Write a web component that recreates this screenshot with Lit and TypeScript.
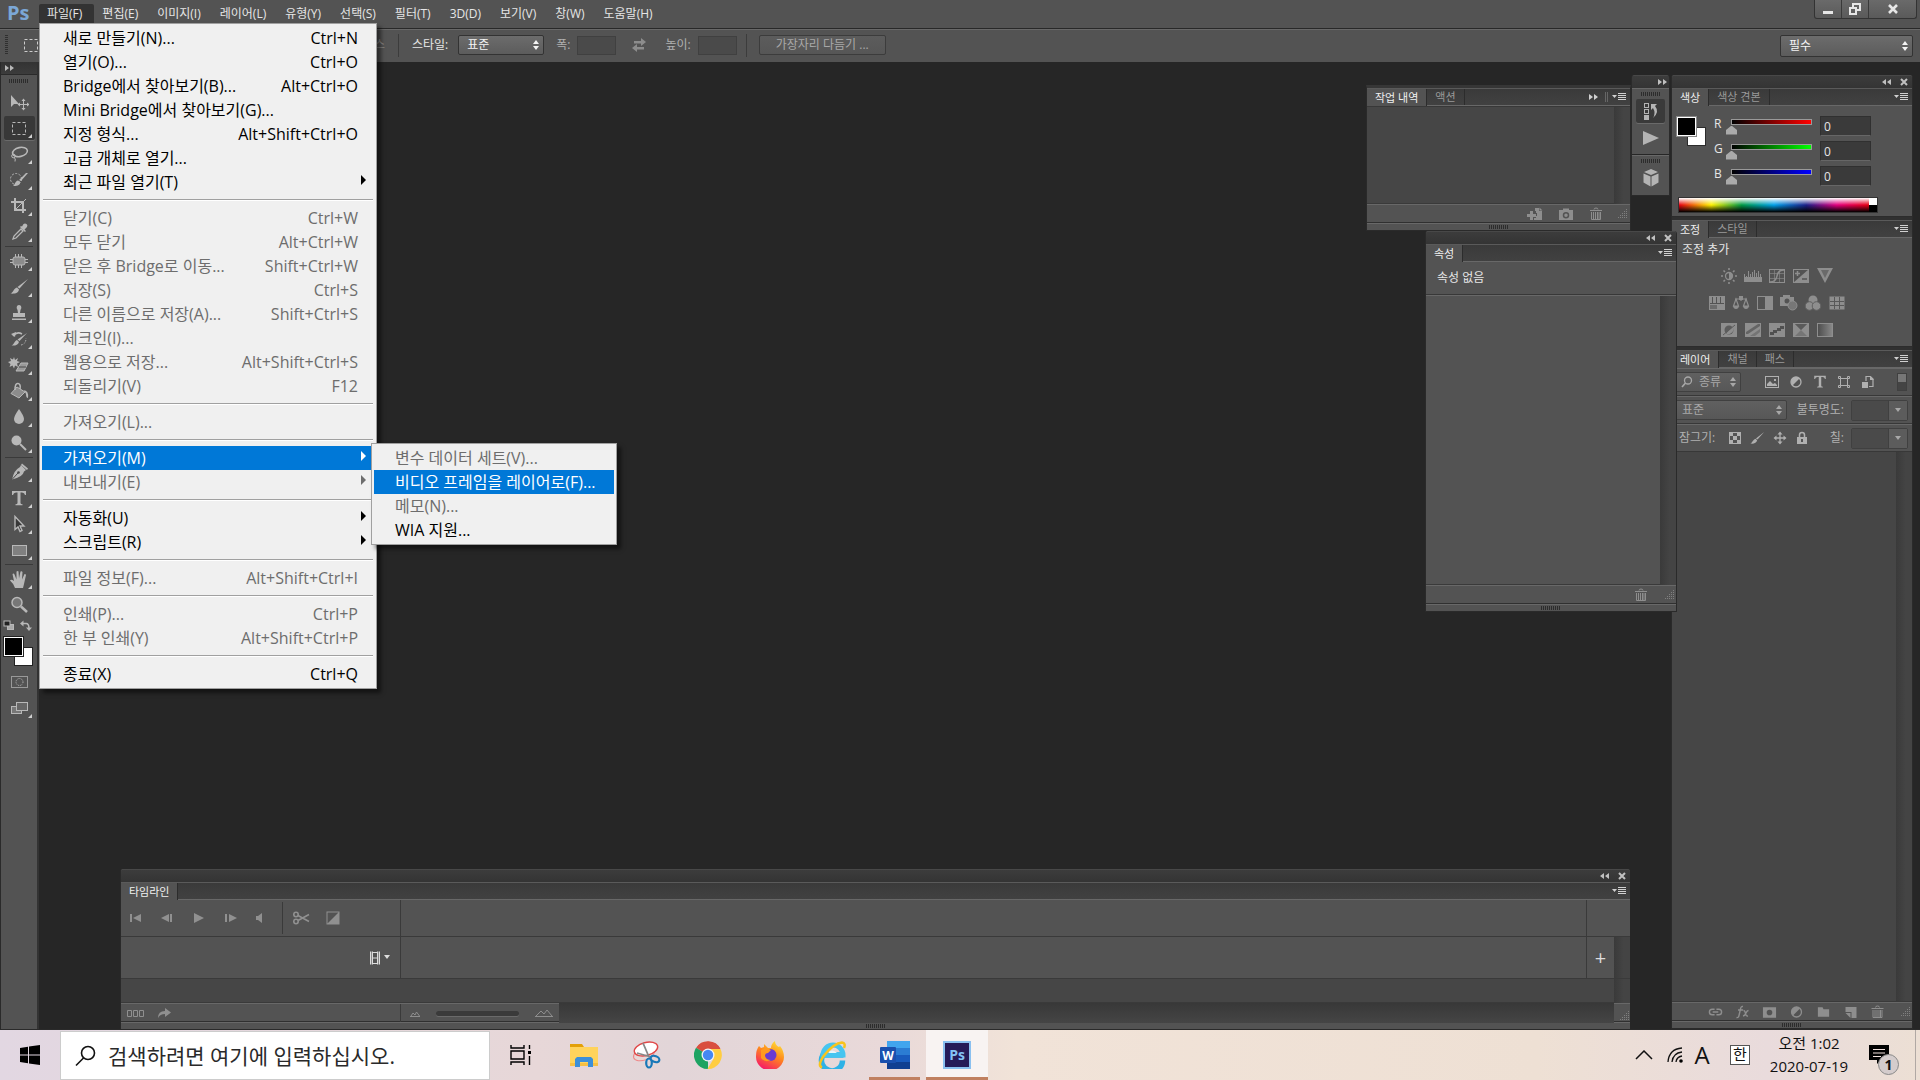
import { LitElement, html, css, svg, nothing, TemplateResult, SVGTemplateResult } from "lit";
import { customElement, property } from "lit/decorators.js";
import { classMap } from "lit/directives/class-map.js";

/* ---------- icons ---------- */

interface Glyph {
  w: number;
  h: number;
  body: SVGTemplateResult;
}

const g = (w: number, h: number, body: SVGTemplateResult): Glyph => ({ w, h, body });

const icons: Record<string, Glyph> = {
  // tools
  move: g(20, 20, svg`<path fill="currentColor" d="M2 3v12l3-3 5 0z"/><path stroke="currentColor" stroke-width="1" fill="none" d="M14.500 8v9M10 12.500h9"/><path fill="currentColor" d="M12.500 9l2-2.500 2 2.500zM12.500 16l2 2.500 2-2.500zM11 10.500l-2.500 2 2.500 2zM18 10.500l2.500 2-2.500 2z"/>`),
  marquee: g(20, 20, svg`<rect x="3.500" y="4.500" width="13" height="12" fill="none" stroke="currentColor" stroke-dasharray="3 2"/>`),
  lasso: g(20, 20, svg`<ellipse cx="11" cy="8" rx="7.500" ry="4.500" fill="none" stroke="currentColor" stroke-width="1.600" transform="rotate(-12 11 8)"/><circle cx="4.500" cy="12" r="1.800" fill="none" stroke="currentColor"/><path d="M5 13.500q2 1 1 4" fill="none" stroke="currentColor"/>`),
  quick: g(20, 20, svg`<circle cx="7" cy="9" r="5.500" fill="none" stroke="currentColor" stroke-dasharray="2 1.500"/><path fill="currentColor" d="M19 3l-7 8-2-1 7-7zM11 11.500c1 4-4 5-7 4.500 2-1 2-5 5-5.500z"/>`),
  crop: g(20, 20, svg`<path fill="none" stroke="currentColor" stroke-width="2" d="M6 2v12h11M2 6h12v11"/><path stroke="currentColor" d="M6 14L17 3"/>`),
  dropper: g(20, 20, svg`<path fill="none" stroke="currentColor" stroke-width="1.300" d="M4 17l1-3 7-7 2 2-7 7z"/><path fill="currentColor" d="M11 5l5 5 1-1-1.500-1.500 2.500-2.500q1-2-.5-3t-3 0L13 4.500 12 4z"/>`),
  heal: g(20, 20, svg`<rect x="4" y="6" width="12" height="8" rx="2" fill="#8c8c8c" stroke="currentColor"/><path stroke="currentColor" d="M6.500 3v3M9.500 3v3M12.500 3v3M6.500 14v3M9.500 14v3M12.500 14v3M1 8.500h3M1 11.500h3M16 8.500h3M16 11.500h3"/>`),
  brush: g(20, 20, svg`<path fill="currentColor" d="M19 2L10.500 11.500 8.500 10zM8 10.500l2 2c-.5 4-5 4.500-8.500 4 3-1 3-5 6.500-6z"/>`),
  stamp: g(20, 20, svg`<path fill="currentColor" d="M8 3a3 3 0 014 0q1 2-.500 4l-.5 3H16v4H4v-4h5l-.500-3q-1.500-2-.5-4zM3 15.500h14V17H3z"/>`),
  history: g(20, 20, svg`<path fill="currentColor" d="M18 4l-7.500 8-2-1.500zM8 11l2 2c-1 3-4 4-7.500 3.500 3-1 2.500-4.500 5.500-5.500z"/><path d="M4 7q4-5 9-2" fill="none" stroke="currentColor" stroke-width="1.500"/><path fill="currentColor" d="M2 5l5-2-1 5z"/><path d="M12 16q5-1 5-7" fill="none" stroke="currentColor" stroke-dasharray="1.500 1.500"/>`),
  eraser: g(24, 20, svg`<path fill="currentColor" d="M7 2l1 3 3-2-1 3 3 1-3 1.500 1 3.500-3-1.500-1 3-1.500-3-3 1.500 1-3L1 7l3-1-1-3 3 1.500z"/><path fill="#999" stroke="currentColor" d="M14 8h7l-4 8h-8z"/><path stroke="#484848" d="M12 12h7"/>`),
  bucket: g(20, 20, svg`<path fill="#8c8c8c" stroke="currentColor" d="M8 6l8 5-6 6-8-4.500z"/><path fill="none" stroke="currentColor" stroke-width="1.500" d="M6 9q0-7 3-6.500T11 8"/><path fill="currentColor" d="M15 9q5 1 4 8-2 0-2-4z"/>`),
  blur: g(20, 20, svg`<path fill="currentColor" d="M10 2q5 7 5 10a5 5 0 01-10 0Q5 9 10 2z"/>`),
  dodge: g(20, 20, svg`<circle cx="7.500" cy="7.500" r="5" fill="currentColor"/><path stroke="currentColor" stroke-width="2" d="M11 11l6 6"/>`),
  pen: g(20, 20, svg`<path fill="currentColor" d="M12 3l5 5-2 1.500Q14 15 3 17.500 5 8 11 5z"/><path stroke="#484848" d="M3 17.500l6-6.500"/><circle cx="9.500" cy="10.500" r="1.300" fill="#484848"/><path fill="currentColor" d="M13 1.500l6 5-1 1.500-6-5z"/>`),
  type: g(20, 20, svg`<path fill="currentColor" d="M3 3h14v4h-1q-.5-2.500-3-2.500h-1.500V15q0 1.300 2 1.300v1H6.500v-1q2 0 2-1.300V4.500H7Q4.500 4.500 4 7H3z"/>`),
  select: g(20, 20, svg`<path fill="#383838" stroke="currentColor" stroke-width="1.400" d="M6 2.500v13l3-2.500 2 4.500 2-1-2-4.500h4z"/>`),
  rect: g(20, 20, svg`<rect x="3.500" y="5.500" width="14" height="10" fill="#808080" stroke="currentColor"/>`),
  hand: g(20, 20, svg`<path fill="currentColor" d="M6 19q-1-4-5-7.500 1-1.500 4 .500L3.500 5q1.500-1 2 .5l2 5L7.500 2.500q1.500-1 2 0l.500 7 1.500-7q1.500-.5 2 .5l-.500 7.500L15.500 5q1.500 0 1.500 1l-2 9-1 4z"/>`),
  zoom: g(20, 20, svg`<circle cx="8" cy="7.500" r="5" fill="#777" stroke="currentColor" stroke-width="1.500"/><path stroke="currentColor" stroke-width="2.500" d="M12 11.500l6 5.500"/>`),
  miniSwatch: g(12, 12, svg`<rect x="4.500" y="4.500" width="6" height="5" fill="#aaa" stroke="currentColor"/><rect x="1" y="1" width="6" height="5" fill="#222" stroke="currentColor"/>`),
  swap: g(12, 12, svg`<path fill="none" stroke="currentColor" stroke-width="1.500" d="M3 3.500h3q3 0 3 5"/><path fill="currentColor" d="M0 3.500L3.500.5v6zM6 7.500h6L9 11z"/>`),
  quickMask: g(20, 20, svg`<rect x="2.500" y="4.500" width="16" height="11" fill="none" stroke="#999"/><circle cx="10.500" cy="10" r="3.500" fill="none" stroke="currentColor" stroke-dasharray="1 1"/>`),
  screen: g(20, 20, svg`<rect x="2.500" y="8.500" width="10" height="7" fill="#777" stroke="currentColor"/><rect x="7.500" y="4.500" width="11" height="8" fill="#666" stroke="currentColor"/>`),
  // chrome
  chevR: g(10, 8, svg`<path fill="currentColor" d="M0 1l4 3-4 3zM5 1l4 3-4 3z"/>`),
  chevL: g(10, 8, svg`<path fill="currentColor" d="M4 1L0 4l4 3zM9 1L5 4l4 3z"/>`),
  close: g(8, 8, svg`<path stroke="currentColor" stroke-width="2" d="M1 1l6 6M7 1L1 7"/>`),
  flyout: g(14, 10, svg`<path fill="currentColor" d="M0 3h5L2.500 6z"/><path stroke="currentColor" d="M6 1.500h8M6 3.500h8M6 5.500h8M6 7.500h8"/>`),
  minimize: g(14, 14, svg`<path fill="currentColor" d="M2 9h10v3H2z"/>`),
  restore: g(14, 14, svg`<path fill="none" stroke="currentColor" stroke-width="2" d="M5 5V2h7v6H9M2 6h6v6H2z"/>`),
  bigClose: g(14, 14, svg`<path stroke="currentColor" stroke-width="2.600" d="M3 3l8 8M11 3l-8 8"/>`),
  exchange: g(16, 14, svg`<path fill="currentColor" d="M3 3h7V0l5 4-5 4V5.500H3zM13 9H6V6L1 10l5 4v-2.500h7z"/>`),
  arrowDown: g(8, 5, svg`<path fill="currentColor" d="M1 0h6L4 4z"/>`),
  resize: g(10, 10, svg`<path fill="#808080" d="M8 0h1v1H8zM6 2h1v1H6zM8 2h1v1H8zM4 4h1v1H4zM6 4h1v1H6zM8 4h1v1H8zM2 6h1v1H2zM4 6h1v1H4zM6 6h1v1H6zM8 6h1v1H8zM0 8h1v1H0zM2 8h1v1H2zM4 8h1v1H4zM6 8h1v1H6zM8 8h1v1H8z"/>`),
  trash: g(14, 14, svg`<path fill="none" stroke="currentColor" d="M1 3.500h12M5 2.500q0-1.500 2-1.500t2 1.500M2.500 5v7.500h9V5M4.500 5v7M6.500 5v7M8.500 5v7M10 5v7"/>`),
  newDoc: g(16, 14, svg`<path fill="currentColor" d="M8 1h4v3h3v9H7v-2h2V9h1V6H9V4H8z"/><path fill="currentColor" d="M12.500.500L15.500 3.500h-3z"/><path fill="currentColor" d="M3 4h3v3h3v3H6v3H3v-3H0V7h3z"/>`),
  camera: g(16, 14, svg`<path fill="currentColor" fill-rule="evenodd" d="M1 3h4V1.500h6V3h4v10H1zM8 5a3.200 3.200 0 100 6.500A3.200 3.200 0 008 5zm0 1.500a1.700 1.700 0 110 3.500 1.700 1.700 0 010-3.500z"/>`),
  dockHistory: g(18, 20, svg`<rect x="2.500" y="2.500" width="4" height="4" fill="none" stroke="currentColor"/><rect x="2.500" y="8.500" width="4" height="4" fill="none" stroke="currentColor"/><path fill="currentColor" d="M2 14h5v5H2zM9 3h6L13 5q5 6-2 12 3-5 0-10L9 9z"/>`),
  dockPlay: g(18, 18, svg`<path fill="currentColor" d="M1 2l16 7-16 7z"/>`),
  cube: g(18, 20, svg`<path fill="currentColor" d="M9 1l7 3-7 3-7-3zM1.500 5.500L8.500 8.500v10L1.500 14.500zM16.500 5.500l-7 3v10l7-4z"/>`),
  // adjustments
  brightness: g(18, 18, svg`<circle cx="9" cy="9" r="3.500" fill="none" stroke="currentColor" stroke-width="1.300"/><path fill="currentColor" d="M9 5.500a3.500 3.500 0 010 7z"/><path stroke="currentColor" stroke-width="1.600" d="M9 1v2M9 15v2M1 9h2M15 9h2M3.500 3.500L5 5M13 13l1.500 1.500M3.500 14.500L5 13M13 5l1.500-1.500"/>`),
  levels: g(18, 14, svg`<path fill="currentColor" d="M0 8h18v5H0z"/><path stroke="currentColor" stroke-width="1" d="M.5 5v4M2.500 7v2M4.500 2v7M6.500 5v4M8.500 3v6M10.500 1v8M12.500 4v5M14.500 2v7M16.500 5v4"/>`),
  curves: g(16, 14, svg`<rect x=".5" y=".5" width="15" height="13" fill="none" stroke="currentColor"/><path stroke="currentColor" stroke-opacity=".6" d="M5.500 0v14M10.500 0v14M0 4.500h16M0 9.500h16"/><path fill="none" stroke="currentColor" stroke-width="1.500" d="M1 13q6 0 7-6t7-6"/>`),
  exposure: g(16, 14, svg`<rect x=".5" y=".5" width="15" height="13" fill="none" stroke="currentColor"/><path fill="currentColor" d="M16 0v14H0z"/><path stroke="currentColor" stroke-width="1.500" d="M2 4.500h5M4.500 2v5"/><path stroke="#535353" stroke-width="1.500" d="M9 10h5"/>`),
  vibrance: g(18, 16, svg`<path fill="currentColor" d="M1 0h16L9 15z"/><path fill="#6a6a6a" d="M5 2h8L9 10z"/>`),
  hue: g(16, 14, svg`<path fill="currentColor" d="M0 0h16v14H0z"/><path stroke="#535353" d="M1 7.500h14M3.500 1v6M7.500 1v6M11.500 1v6"/><path fill="#6b6b6b" d="M1 9h7v4H1z"/>`),
  balance: g(18, 15, svg`<path fill="none" stroke="currentColor" stroke-width="1.200" d="M3 4h12M9 1v5M4 4L1.500 11h5zM14 4l-2.500 7h5z"/><path fill="currentColor" d="M1 11h6q-.5 3-3 3t-3-3zM11 11h6q-.5 3-3 3t-3-3zM7 1h4v4H7z"/>`),
  bw: g(16, 14, svg`<rect x=".5" y=".5" width="15" height="13" fill="none" stroke="currentColor"/><path fill="currentColor" d="M8 0h8v14H8z"/>`),
  photo: g(18, 16, svg`<path fill="currentColor" d="M0 2h3V0h7v2h4v9H0z"/><circle cx="7" cy="6" r="2.500" fill="#535353"/><circle cx="12.500" cy="10.500" r="4.500" fill="#777" stroke="currentColor"/>`),
  mixer: g(18, 16, svg`<circle cx="9" cy="5" r="4.500" fill="currentColor"/><circle cx="5.500" cy="11" r="4.300" fill="currentColor" stroke="#606060"/><circle cx="12.500" cy="11" r="4.300" fill="currentColor" stroke="#606060"/>`),
  lookup: g(16, 14, svg`<rect x=".5" y=".5" width="15" height="13" fill="currentColor"/><path stroke="#585858" d="M5.500 1v12M10.500 1v12M1 5.500h14M1 9.500h14"/>`),
  invert: g(16, 14, svg`<rect width="16" height="14" fill="currentColor"/><circle cx="8" cy="7" r="4.500" fill="#5c5c5c"/><path fill="currentColor" d="M5 10.500q3 2 6-1t1-6z"/><path stroke="#5c5c5c" d="M2 12L14 2"/>`),
  poster: g(16, 14, svg`<rect width="16" height="14" fill="currentColor"/><path fill="#646464" d="M1 9L13 1h2v2L3 11H1z"/><path fill="#747474" d="M5 13l10-7v3l-5 4z"/>`),
  threshold: g(16, 14, svg`<rect width="16" height="14" fill="currentColor"/><path fill="#505050" d="M1 9h3V7h4V5h3V3h4v3h-3v2H8v2H5v2H1z"/>`),
  selective: g(16, 14, svg`<rect x=".5" y=".5" width="15" height="13" fill="#757575" stroke="currentColor"/><path fill="currentColor" d="M1 0l7 7L1 14zM15 0L8 7l7 7z"/><path fill="#5a5a5a" d="M2 1h12L8 7z"/>`),
  gradmap: g(16, 14, svg`<defs><linearGradient id="gm"><stop offset="0" stop-color="#4c4c4c"/><stop offset="1" stop-color="#8a8a8a"/></linearGradient></defs><rect x=".5" y=".5" width="15" height="13" fill="url(#gm)" stroke="currentColor"/>`),
  // layers
  search: g(14, 14, svg`<circle cx="8" cy="5.500" r="3.500" fill="none" stroke="currentColor" stroke-width="1.300"/><path stroke="currentColor" stroke-width="1.600" d="M5.500 8L2 12"/>`),
  image: g(14, 14, svg`<rect x=".5" y="1.500" width="13" height="11" fill="none" stroke="currentColor"/><path fill="currentColor" d="M2 11V9l3-3 3 3 2-1 2 2v1zM9 4h2v2H9z"/>`),
  adjust: g(14, 14, svg`<circle cx="7" cy="7" r="5" fill="none" stroke="currentColor" stroke-width="1.300"/><path fill="currentColor" d="M3.500 3.500a5 5 0 017 0l-7 7a5 5 0 010-7z"/>`),
  shape: g(14, 14, svg`<path fill="none" stroke="currentColor" d="M3.500 3.500h7v7h-7zM1.500 1.500h2v2h-2zM10.500 1.500h2v2h-2zM1.500 10.500h2v2h-2zM10.500 10.500h2v2h-2z"/>`),
  smart: g(14, 14, svg`<path fill="none" stroke="currentColor" stroke-width="1.200" d="M5 6V1.500h4.500L12 4v7.500H8"/><path fill="currentColor" d="M1 7h6v6H1zM9 1v4h4z"/>`),
  checker: g(14, 14, svg`<rect x="1.500" y="1.500" width="11" height="11" fill="none" stroke="currentColor"/><path fill="currentColor" d="M2 2h3v3H2zM9 2h3v3H9zM5 5h4v4H5zM2 9h3v3H2zM9 9h3v3H9z"/>`),
  fourway: g(14, 14, svg`<path stroke="currentColor" stroke-width="1.300" d="M7 2v10M2 7h10"/><path fill="currentColor" d="M4.500 3.500L7 .5l2.500 3zM4.500 10.500l2.500 3 2.500-3zM3.500 4.500L.5 7l3 2.500zM10.500 4.500l3 2.500-3 2.500z"/>`),
  lock: g(14, 14, svg`<path fill="none" stroke="currentColor" stroke-width="1.500" d="M4.500 7V4q0-2.500 2.500-2.500T9.500 4v3"/><path fill="currentColor" fill-rule="evenodd" d="M2 6h10v7H2zM6 8v3h2V8z"/>`),
  link: g(16, 14, svg`<path fill="none" stroke="currentColor" stroke-width="1.500" d="M7 4H4.500Q1.500 4 1.500 7t3 3H7M9 4h2.500q3 0 3 3t-3 3H9M5 7h6"/>`),
  fx: g(15, 14, svg`<path fill="none" stroke="currentColor" stroke-width="1.400" d="M8 1.500Q6 1 5.500 4L4 10.500Q3.500 13 1.500 12.500M3 5h5M8.500 5.500q1.500 0 2 3t2.500 2.500M13.500 5.500q-1.500 0-2.500 2.500t-3 3"/>`),
  mask: g(16, 14, svg`<path fill="currentColor" fill-rule="evenodd" d="M1 2h14v11H1zM8 4.500a3 3 0 100 6 3 3 0 000-6z"/>`),
  folder: g(16, 14, svg`<path fill="currentColor" d="M2 2h5l1 2h6v8H2z"/>`),
  newLayer: g(14, 14, svg`<path fill="currentColor" d="M2 2h11v11H8V7H2z"/><path fill="currentColor" d="M2 8h5v5z"/>`),
  // timeline
  first: g(14, 12, svg`<path fill="currentColor" d="M1 2h2v8H1zM12 2v8L4 6z"/>`),
  prev: g(14, 12, svg`<path fill="currentColor" d="M8 2v8L0 6zM9 2h2v8H9z"/>`),
  play: g(12, 12, svg`<path fill="currentColor" d="M1 1l10 5-10 5z"/>`),
  next: g(14, 12, svg`<path fill="currentColor" d="M2 2h2v8H2zM6 2l8 4-8 4z"/>`),
  sound: g(10, 12, svg`<path fill="currentColor" d="M1 4h2l4-3v10L3 8H1z"/>`),
  scissors: g(18, 14, svg`<g fill="none" stroke="currentColor" stroke-width="1.600"><circle cx="4" cy="3.500" r="2.200"/><circle cx="4" cy="10.500" r="2.200"/><path d="M6 4.500l11 6M6 9.500l11-6"/></g>`),
  transition: g(14, 14, svg`<rect x="1" y="1" width="12" height="12" fill="none" stroke="currentColor"/><path fill="currentColor" d="M13 1v12H1z"/>`),
  film: g(10, 14, svg`<path fill="none" stroke="currentColor" stroke-width="1.400" d="M.7.500v13M9.300.500v13"/><path fill="none" stroke="currentColor" d="M2.500.500v13M7.500.500v13M2.500 7h5M2.500 1.500h5M2.500 12.500h5"/>`),
  frames: g(18, 10, svg`<path fill="none" stroke="currentColor" d="M.5 2.500h4v6h-4zM6.500 2.500h4v6h-4zM12.500 2.500h4v6h-4z"/>`),
  forward: g(14, 12, svg`<path fill="currentColor" d="M8 1l6 4.500L8 10V7q-5 0-7 4 0-7 7-7z"/>`),
  mountS: g(10, 8, svg`<path fill="none" stroke="currentColor" d="M0 7.500h10M1 7l2-3 2 2 1.500-3L9.500 7"/>`),
  mountL: g(18, 10, svg`<path fill="none" stroke="currentColor" d="M0 8.500h18M1 8l5-5 3 3 3-4 5 6"/>`),
  // taskbar
  windows: g(20, 20, svg`<path fill="#000" d="M0 3l8-1.200V9.500H0zM9 1.600L20 0v9.500H9zM0 10.500h8v7.700L0 17zM9 10.500h11V20L9 18.400z"/>`),
  find: g(22, 22, svg`<circle cx="14" cy="8" r="6.500" fill="none" stroke="#111" stroke-width="1.600"/><path stroke="#111" stroke-width="1.600" d="M9.500 13L2 20.500"/>`),
  taskview: g(22, 20, svg`<path fill="none" stroke="#000" stroke-width="1.400" d="M1 0v3h13V0M1 20v-3h13v3M1 6h13v8H1zM19.500 0v4M19.500 11v9"/><path d="M18 6h3v3h-3z"/>`),
  explorer: g(28, 24, svg`<path fill="#e3a008" d="M0 1h12l2 3v4H0z"/><path fill="#ffd35c" d="M0 4h28v19H0z"/><path fill="#f6c044" d="M0 20h28v3H0z"/><path fill="#3c8fd8" d="M5 24v-8l2-2h14l2 2v8h-5v-5h-8v5z"/>`),
  snip: g(30, 30, svg`<ellipse cx="13" cy="14" rx="11" ry="6" transform="rotate(-20 13 14)" fill="#e8d8d8" stroke="#e88" /><ellipse cx="15" cy="9" rx="12" ry="6.500" transform="rotate(-15 15 9)" fill="#fff" stroke="#e04848" stroke-width="1.400"/><path stroke="#888" stroke-width="1.800" d="M12 3l6 14M6 13l14 4"/><g fill="none" stroke="#1878b8" stroke-width="2.200"><ellipse cx="18" cy="23" rx="2.800" ry="4.500"/><ellipse cx="24" cy="19" rx="4.500" ry="3" transform="rotate(20 24 19)"/></g>`),
  chrome: g(28, 28, svg`<path fill="#d94f3f" d="M14 14L2.300 7A14 14 0 0126 7.500z"/><path fill="#1da362" d="M14 14L14 28A14 14 0 012 6.800z"/><path fill="#ffcd40" d="M14 8h12.500A14 14 0 0113.500 28L20 17z"/><path fill="#d94f3f" d="M2.200 6.800A14 14 0 0126.500 8H14z"/><circle cx="14" cy="14" r="6.500" fill="#f4f4f4"/><circle cx="14" cy="14" r="5.200" fill="#4587f3"/>`),
  firefox: g(28, 28, svg`<defs><linearGradient id="ff" x1=".8" y1="0" x2=".3" y2="1"><stop offset="0" stop-color="#ffe33a"/><stop offset=".45" stop-color="#ff8a1c"/><stop offset="1" stop-color="#f5156c"/></linearGradient></defs><path fill="url(#ff)" d="M3 5l2 2 3-1V3l4 4 3 0q0-4 4-7 0 4 4 6l1-1q4 5 4 11A13.500 13.500 0 010 15Q0 9 3 5z"/><circle cx="14.500" cy="14" r="6" fill="#6b3bd1"/><path fill="#ff9a20" d="M5 9q6-3 10 0l-3 3q-3 0-3 3 1 4 6 4-6 3-10-2z"/>`),
  ie: g(28, 28, svg`<path fill="none" stroke="#2fb2e6" stroke-width="5.500" d="M24.500 19.500A10.500 10.500 0 115 14h20.500"/><path fill="none" stroke="#46c5f0" stroke-width="5" d="M5 14a10 10 0 0120 0z"/><path fill="#e8f6fb" d="M10 12q4-5 9 0z"/><path fill="none" stroke="#f8c41c" stroke-width="2.500" d="M4 26.500q-5-2 2-12Q16 2 24 1.500q4 .5 2 5.500"/>`),
  word: g(30, 28, svg`<path fill="#41a5ee" d="M7 0h23v7H7z"/><path fill="#2b7cd3" d="M7 7h23v7H7z"/><path fill="#185abd" d="M7 14h23v7H7z"/><path fill="#103f91" d="M7 21h23v7H7z"/><rect y="6" width="16" height="16" rx="1" fill="#1a50ae"/><text x="8" y="18.500" text-anchor="middle" font-family="Open Sans, sans-serif" font-weight="700" font-size="12" fill="#fff">W</text>`),
  psIcon: g(28, 28, svg`<rect x="1" y="1" width="26" height="26" fill="#261b58" stroke="#8ac0f0" stroke-width="2"/><text x="14" y="18.500" text-anchor="middle" font-family="Open Sans, sans-serif" font-weight="700" font-size="14" fill="#84c3f4">Ps</text>`),
  up: g(18, 10, svg`<path fill="none" stroke="#111" stroke-width="1.500" d="M1 9l8-8 8 8"/>`),
  wifi: g(16, 16, svg`<g fill="none" stroke="#111" stroke-width="1.300"><path d="M1 15Q2 2 15 1"/><path d="M5 15Q6 6 15 5M9 15q.5-5 6-6"/></g><circle cx="14" cy="14" r="1.800"/>`),
  notice: g(22, 20, svg`<path d="M0 0h20v15h-8l-4 4v-4H0z"/><path stroke="#f0e0dc" stroke-width="1.200" d="M4 4.500h12M4 8h12M4 11.500h8"/>`),
};

const icon = (name: string): TemplateResult => {
  const i = icons[name];
  return html`<svg class="icon" aria-hidden="true" width=${i.w} height=${i.h} viewBox="0 0 ${i.w} ${i.h}">${i.body}</svg>`;
};

/* ---------- shared styles ---------- */

const base = css`
  * { box-sizing: border-box; }
  :host {
    --ui: "Open Sans", "Noto Sans CJK KR", sans-serif;
    --face: #535353;
    --well: #464646;
    --line: #383838;
    --lite: #686868;
    font-family: var(--ui);
    font-size: 12px;
    line-height: 16px;
    color: #e6e6e6;
  }
  button, input, select {
    font: inherit;
    color: inherit;
    margin: 0;
    padding: 0;
    border: 0;
    background: none;
    border-radius: 0;
    outline: none;
    min-width: 0;
  }
  .icon { display: block; flex: none; }
  .pick {
    position: relative;
    display: flex;
    align-items: center;
    height: 20px;
    border: 1px solid #333;
    border-radius: 2px;
    background: linear-gradient(#6c6c6c, #5c5c5c);
    color: #f4f4f4;
  }
  .pick select { appearance: none; width: 100%; height: 18px; padding: 0 20px 0 8px; line-height: 18px; }
  .pick option { color: #000; }
  .pick::before, .pick::after {
    content: "";
    position: absolute;
    right: 4px;
    border: 0 solid transparent;
    border-width: 0 3px;
    pointer-events: none;
  }
  .pick::before { bottom: calc(50% + 1px); border-bottom: 4px solid currentColor; }
  .pick::after { top: calc(50% + 1px); border-top: 4px solid currentColor; }
  .pick.dim { color: #a8a8a8; border-color: #404040; background: linear-gradient(#606060, #575757); }
  .grip { height: 4px; width: 20px; background: repeating-linear-gradient(90deg, #2c2c2c 0 1px, transparent 1px 2px); }
`;

/* ---------- menus ---------- */

interface Entry {
  label: string;
  keys?: string;
  off?: boolean;
  sub?: boolean;
  open?: Entry[];
  hot?: boolean;
}
const SEP = null;

const fileMenu: (Entry | null)[] = [
  { label: "새로 만들기(N)...", keys: "Ctrl+N" },
  { label: "열기(O)...", keys: "Ctrl+O" },
  { label: "Bridge에서 찾아보기(B)...", keys: "Alt+Ctrl+O" },
  { label: "Mini Bridge에서 찾아보기(G)..." },
  { label: "지정 형식...", keys: "Alt+Shift+Ctrl+O" },
  { label: "고급 개체로 열기..." },
  { label: "최근 파일 열기(T)", sub: true },
  SEP,
  { label: "닫기(C)", keys: "Ctrl+W", off: true },
  { label: "모두 닫기", keys: "Alt+Ctrl+W", off: true },
  { label: "닫은 후 Bridge로 이동...", keys: "Shift+Ctrl+W", off: true },
  { label: "저장(S)", keys: "Ctrl+S", off: true },
  { label: "다른 이름으로 저장(A)...", keys: "Shift+Ctrl+S", off: true },
  { label: "체크인(I)...", off: true },
  { label: "웹용으로 저장...", keys: "Alt+Shift+Ctrl+S", off: true },
  { label: "되돌리기(V)", keys: "F12", off: true },
  SEP,
  { label: "가져오기(L)...", off: true },
  SEP,
  {
    label: "가져오기(M)", sub: true, hot: true,
    open: [
      { label: "변수 데이터 세트(V)...", off: true },
      { label: "비디오 프레임을 레이어로(F)...", hot: true },
      { label: "메모(N)...", off: true },
      { label: "WIA 지원..." },
    ],
  },
  { label: "내보내기(E)", sub: true, off: true },
  SEP,
  { label: "자동화(U)", sub: true },
  { label: "스크립트(R)", sub: true },
  SEP,
  { label: "파일 정보(F)...", keys: "Alt+Shift+Ctrl+I", off: true },
  SEP,
  { label: "인쇄(P)...", keys: "Ctrl+P", off: true },
  { label: "한 부 인쇄(Y)", keys: "Alt+Shift+Ctrl+P", off: true },
  SEP,
  { label: "종료(X)", keys: "Ctrl+Q" },
];

@customElement("drop-menu")
class DropMenu extends LitElement {
  @property({ attribute: false }) entries: (Entry | null)[] = [];

  static styles = [base, css`
    :host {
      display: block;
      padding: 2px;
      border: 1px solid #a0a0a0;
      background: #f0f0f0;
      box-shadow: 4px 4px 4px rgba(0, 0, 0, 0.5);
      color: #000;
      font-size: 16px;
      line-height: 24px;
    }
    ul { list-style: none; margin: 0; padding: 0; }
    .row { position: relative; }
    .item {
      display: flex;
      justify-content: space-between;
      width: 100%;
      height: 24px;
      padding: 0 16px 0 21px;
      white-space: nowrap;
      text-align: left;
    }
    .item.off { color: #6d6d6d; }
    .item.hot { background: #0078d7; color: #fff; }
    .arrow { align-self: center; margin: 0 -8px 4px 0; border: 5px solid transparent; border-left-color: currentColor; border-right: 0; }
    .sep { height: 12px; padding: 5px 1px 0; }
    .sep::before { content: ""; display: block; height: 1px; background: #a0a0a0; box-shadow: 0 1px #fff; }
    .sub { position: absolute; top: -3px; left: 329px; width: 246px; z-index: 2; }
  `];

  render(): TemplateResult {
    return html`<ul role="menu">
      ${this.entries.map((e) => e === null
        ? html`<li class="sep" role="separator"></li>`
        : html`<li class="row" role="none">
            <button class=${classMap({ item: true, off: !!e.off, hot: !!e.hot })} role="menuitem" ?disabled=${e.off}>
              <span>${e.label}</span>
              ${e.keys ? html`<span>${e.keys}</span>` : nothing}
              ${e.sub ? html`<span class="arrow"></span>` : nothing}
            </button>
            ${e.open ? html`<drop-menu class="sub" .entries=${e.open}></drop-menu>` : nothing}
          </li>`)}
    </ul>`;
  }
}

@customElement("menu-bar")
class MenuBar extends LitElement {
  static styles = [base, css`
    :host { display: flex; height: 29px; background: var(--face); border-bottom: 1px solid #282828; }
    .logo { width: 39px; padding: 2px 0 0 7px; font-size: 20px; line-height: 21px; font-weight: 700; color: #7ba7d6; }
    nav { position: relative; display: flex; padding-top: 4px; }
    .entry { height: 19px; padding: 0 11px 0 8px; line-height: 19px; white-space: nowrap; border-radius: 2px 2px 0 0; }
    .entry.on { padding-right: 12px; background: #333; }
    .drop { position: absolute; top: 23px; left: 0; width: 338px; }
    .win { display: flex; margin-left: auto; margin-right: 3px; height: 19px; border: 1px solid #333; border-top: 0; border-radius: 0 0 3px 3px; background: linear-gradient(#6a6a6a, #5a5a5a); color: #e6e6e6; }
    .win button { display: grid; place-items: center; width: 27px; border-right: 1px solid #3a3a3a; }
    .win button:last-child { width: 47px; border-right: 0; }
  `];

  render(): TemplateResult {
    const names = ["파일(F)", "편집(E)", "이미지(I)", "레이어(L)", "유형(Y)", "선택(S)", "필터(T)", "3D(D)", "보기(V)", "창(W)", "도움말(H)"];
    return html`
      <div class="logo">Ps</div>
      <nav>
        ${names.map((n, i) => html`<button class=${classMap({ entry: true, on: i === 0 })}>${n}</button>`)}
        <drop-menu class="drop" .entries=${fileMenu}></drop-menu>
      </nav>
      <div class="win">
        <button aria-label="최소화">${icon("minimize")}</button>
        <button aria-label="이전 크기로 복원">${icon("restore")}</button>
        <button aria-label="닫기">${icon("bigClose")}</button>
      </div>`;
  }
}

@customElement("options-bar")
class OptionsBar extends LitElement {
  static styles = [base, css`
    :host { display: flex; align-items: center; height: 33px; padding: 0 7px 2px 5px; background: var(--face); border-top: 1px solid var(--lite); white-space: nowrap; }
    .handle { width: 3px; height: 20px; background: repeating-linear-gradient(#303030 0 1px, transparent 1px 2px); margin-right: 13px; }
    .preset { color: #ccc; }
    .alias { width: 351px; margin-left: -6px; padding-right: 1px; text-align: right; color: #888; }
    .rule { width: 1px; height: 23px; background: #3c3c3c; }
    .first { margin-left: 12px; }
    .first + label { margin-left: 13px; }
    .style { width: 86px; margin-left: 10px; }
    .dim { color: #b0b0b0; }
    .num { width: 39px; height: 19px; margin-left: 7px; background: #4a4a4a; border: 1px solid #404040; }
    .swap { margin: 0 18px 0 15px; color: #8c8c8c; }
    .space { margin-left: 12px; }
    .after { margin-left: 9px; }
    .refine { width: 127px; height: 20px; margin-left: 12px; border: 1px solid #3c3c3c; border-radius: 2px; background: linear-gradient(#5c5c5c, #565656); color: #a8a8a8; }
    .work { width: 133px; height: 22px; margin: 2px 0 0 auto; }
  `];

  render(): TemplateResult {
    return html`
      <span class="handle"></span>
      <span class="preset">${icon("marquee")}</span>
      <span class="alias">스</span>
      <span class="rule first"></span>
      <label for="style">스타일:</label>
      <span class="pick style"><select id="style"><option>표준</option></select></span>
      <label class="dim space" for="w">폭:</label><input class="num" id="w" disabled>
      <button class="swap" aria-label="폭과 높이 교체">${icon("exchange")}</button>
      <label class="dim" for="h">높이:</label><input class="num" id="h" disabled>
      <span class="rule after"></span>
      <button class="refine" disabled>가장자리 다듬기 ...</button>
      <span class="pick work"><select aria-label="작업 영역"><option>필수</option></select></span>`;
  }
}

@customElement("tool-box")
class ToolBox extends LitElement {
  static styles = [base, css`
    :host { display: flex; flex-direction: column; width: 39px; background: var(--face); border-left: 1px solid #2a2a2a; border-right: 2px solid #333; color: #b8b8b8; }
    .head { height: 13px; padding: 2px 0 0 4px; background: linear-gradient(#333, #3c3c3c); border-bottom: 1px solid #2a2a2a; }
    .grip { margin: 4px auto 6px; }
    .tool { position: relative; display: grid; place-items: center; width: 31px; height: 24px; margin: 1px 0 1px 3px; padding-right: 2px; border-radius: 2px; }
    .tool.on { background: #383838; box-shadow: 0 1px #6a6a6a; }
    .tool.more::after { content: ""; position: absolute; right: 3px; bottom: 2px; border: 2px solid transparent; border-right-color: #d0d0d0; border-bottom-color: #d0d0d0; }
    .rule { height: 1px; margin: 1px 4px; background: #3a3a3a; }
    .mini { display: flex; justify-content: space-between; height: 19px; padding: 2px 5px 0 2px; }
    .colors { position: relative; height: 32px; }
    .swatch { position: absolute; width: 19px; height: 19px; border: 1px solid #222; }
    .back { left: 13px; top: 10px; background: #fff; }
    .fore { left: 3px; top: 0; background: #000; border-color: #fff; box-shadow: 0 0 0 1px #222; }
  `];

  render(): TemplateResult {
    const groups = [
      ["move", "marquee", "lasso", "quick", "crop", "dropper"],
      ["heal", "brush", "stamp", "history", "eraser", "bucket", "blur", "dodge"],
      ["pen", "type", "select", "rect"],
      ["hand", "zoom"],
    ];
    const plain = ["move", "zoom", "quickMask"];
    const tool = (t: string) => html`<button aria-label=${t} class=${classMap({ tool: true, on: t === "marquee", more: !plain.includes(t) })}>${icon(t)}</button>`;
    return html`
      <div class="head">${icon("chevR")}</div>
      <span class="grip"></span>
      ${groups.map((list, i) => html`${i ? html`<span class="rule"></span>` : nothing}${list.map(tool)}`)}
      <div class="mini">${icon("miniSwatch")}${icon("swap")}</div>
      <div class="colors">
        <button class="swatch back" aria-label="배경색"></button>
        <button class="swatch fore" aria-label="전경색"></button>
      </div>
      ${tool("quickMask")}${tool("screen")}`;
  }
}

/* ---------- panels ---------- */

const panel = css`
  .bar { display: flex; justify-content: flex-end; align-items: center; gap: 8px; height: 13px; padding-right: 4px; background: linear-gradient(#3c3c3c, #343434); border-top: 1px solid #484848; color: #c0c0c0; }
  .tabs { display: flex; height: 18px; background: linear-gradient(#3a3a3a, #414141); border-top: 1px solid #5a5a5a; border-bottom: 1px solid var(--lite); color: #d0d0d0; }
  .tab { padding: 0 8px; height: 16px; line-height: 16px; font-size: 11px; color: #9a9a9a; border-right: 1px solid #2c2c2c; white-space: nowrap; }
  .tab.on { background: var(--face); color: #f0f0f0; height: 17px; }
  .tools { display: flex; align-items: center; gap: 5px; margin-left: auto; padding-right: 4px; }
  .foot { display: flex; align-items: center; height: 19px; background: var(--face); border-top: 1px solid var(--lite); box-shadow: 0 -1px #3a3a3a; color: #8e8e8e; }
  .size { display: grid; place-items: center; height: 7px; background: var(--face); border-top: 1px solid var(--lite); box-shadow: 0 -1px #303030; }
  .gutter { width: 16px; background: linear-gradient(90deg, #3a3a3a, #444 60%); }
  .well { display: flex; justify-content: flex-end; }
`;

const tabs = (names: string[], collapse = false): TemplateResult => html`
  <div class="tabs">
    ${names.map((n, i) => html`<button class=${classMap({ tab: true, on: i === 0 })}>${n}</button>`)}
    <span class="tools">${collapse ? icon("chevR") : nothing}${collapse ? html`<span class="bars"></span>` : nothing}${icon("flyout")}</span>
  </div>`;

@customElement("history-panel")
class HistoryPanel extends LitElement {
  static styles = [base, panel, css`
    :host { display: block; border: 1px solid #2a2a2a; border-top: 3px solid #363636; background: var(--face); }
    .well { height: 98px; background: var(--well); border-top: 1px solid var(--line); }
    .foot { justify-content: flex-end; gap: 15px; padding-right: 2px; }
    .bars { width: 3px; height: 10px; margin: 0 -1px 0 1px; border: 1px solid #666; border-width: 0 1px; }
  `];
  render(): TemplateResult {
    return html`${tabs(["작업 내역", "액션"], true)}
      <div class="well"><div class="gutter"></div></div>
      <div class="foot">${icon("newDoc")}${icon("camera")}${icon("trash")}${icon("resize")}</div>
      <div class="size"><span class="grip"></span></div>`;
  }
}

@customElement("properties-panel")
class PropertiesPanel extends LitElement {
  static styles = [base, panel, css`
    :host { display: block; border: 1px solid #2a2a2a; border-top: 0; border-radius: 3px 3px 0 0; background: var(--face); overflow: hidden; }
    .title { height: 33px; padding: 8px 11px; border-bottom: 1px solid var(--line); }
    .well { height: 290px; border-top: 1px solid var(--lite); }
    .foot { justify-content: flex-end; gap: 17px; padding-right: 1px; }
  `];
  render(): TemplateResult {
    return html`<div class="bar">${icon("chevL")}${icon("close")}</div>
      ${tabs(["속성"])}
      <div class="title">속성 없음</div>
      <div class="well"><div class="gutter"></div></div>
      <div class="foot">${icon("trash")}${icon("resize")}</div>
      <div class="size"><span class="grip"></span></div>`;
  }
}

@customElement("timeline-panel")
class TimelinePanel extends LitElement {
  static styles = [base, panel, css`
    :host { display: block; border-left: 1px solid #2a2a2a; border-bottom: 1px solid #2a2a2a; border-radius: 3px 3px 0 0; background: var(--face); overflow: hidden; }
    .row { display: flex; border-bottom: 1px solid #3a3a3a; }
    .left { display: flex; align-items: center; width: 280px; border-right: 1px solid #3a3a3a; color: #909090; }
    .mid { flex: 1; }
    .controls { height: 37px; }
    .controls .left { padding-left: 8px; gap: 18px; }
    .rule { width: 1px; height: 32px; margin: 0 -9px 0 -1px; background: #3a3a3a; }
    .rule + .icon { margin-right: -2px; }
    .cap { width: 44px; border-left: 1px solid #3a3a3a; }
    .track { height: 42px; }
    .track .left { justify-content: flex-end; gap: 3px; padding-right: 9px; color: #ddd; }
    .add { width: 28px; border-left: 1px solid #3a3a3a; font-size: 20px; line-height: 40px; color: #ddd; }
    .empty { display: flex; justify-content: flex-end; height: 24px; background: var(--well); }
    .foot .left { height: 18px; padding-left: 6px; gap: 12px; }
    .zoom { display: flex; align-items: center; gap: 16px; width: 158px; padding: 0 6px 0 9px; }
    .zoom input { appearance: none; width: 88px; height: 5px; border-radius: 3px; background: #3a3a3a; box-shadow: 0 1px #6a6a6a; }
    .zoom input::-webkit-slider-thumb { appearance: none; width: 0; }
    .scroll { flex: 1; height: 20px; margin-top: -1px; background: linear-gradient(#383838, #454545); }
    .corner { display: grid; place-items: end; width: 16px; height: 16px; }
  `];
  render(): TemplateResult {
    return html`<div class="bar">${icon("chevL")}${icon("close")}</div>
      ${tabs(["타임라인"])}
      <div class="row controls">
        <div class="left">
          ${["first", "prev", "play", "next", "sound"].map(icon)}
          <span class="rule"></span>
          ${["scissors", "transition"].map(icon)}
        </div>
        <div class="mid"></div><div class="cap"></div>
      </div>
      <div class="row track">
        <div class="left">${icon("film")}${icon("arrowDown")}</div>
        <div class="mid"></div>
        <button class="add" aria-label="미디어 추가">+</button>
        <div class="gutter"></div>
      </div>
      <div class="empty"><div class="gutter"></div></div>
      <div class="foot">
        <div class="left">${icon("frames")}${icon("forward")}</div>
        <div class="zoom">${icon("mountS")}<input type="range" aria-label="타임라인 확대">${icon("mountL")}</div>
        <div class="scroll"></div>
        <div class="corner">${icon("resize")}</div>
      </div>
      <div class="size"><span class="grip"></span></div>`;
  }
}

@customElement("icon-dock")
class IconDock extends LitElement {
  static styles = [base, panel, css`
    :host { display: block; }
    .shell { border: 1px solid #2a2a2a; border-top: 0; border-radius: 3px 3px 0 0; overflow: hidden; }
    .bar { padding-right: 1px; }
    .group { display: flex; flex-direction: column; align-items: center; padding: 3px 0 4px; gap: 3px; background: var(--face); border-top: 1px solid var(--lite); color: #b4b4b4; }
    .group + .group { margin-top: 1px; padding-bottom: 5px; }
    .cell { display: grid; place-items: center; width: 29px; height: 24px; border-radius: 2px; }
    .cell.on { background: #3a3a3a; box-shadow: 0 1px #6a6a6a; }
  `];
  render(): TemplateResult {
    return html`<div class="shell">
      <div class="bar">${icon("chevR")}</div>
      <div class="group"><span class="grip"></span>
        <button class="cell on" aria-label="작업 내역">${icon("dockHistory")}</button>
        <button class="cell" aria-label="액션">${icon("dockPlay")}</button>
      </div>
      <div class="group"><span class="grip"></span>
        <button class="cell" aria-label="3D">${icon("cube")}</button>
      </div>
    </div>`;
  }
}

@customElement("panel-dock")
class PanelDock extends LitElement {
  static styles = [base, panel, css`
    :host { display: flex; flex-direction: column; border: 1px solid #2a2a2a; border-width: 0 1px 1px; border-radius: 3px 3px 0 0; background: var(--face); overflow: hidden; }
    .tabs, .bar { flex: none; }
    .color { display: grid; grid-template-columns: 38px 1fr; padding: 10px 34px 0 4px; height: 111px; border-bottom: 1px solid #2c2c2c; }
    .chips { position: relative; }
    .chip { position: absolute; width: 19px; height: 19px; border: 1px solid #2c2c2c; }
    .chip.back { left: 11px; top: 11px; background: #fff; }
    .chip.fore { left: 1px; top: 1px; background: #000; border-color: #fff; box-shadow: 0 0 0 1px #888; }
    .chan { display: grid; grid-template-columns: 10px 92px 51px; height: 25px; column-gap: 2px; }
    .chan input[type="range"] { appearance: none; width: 92px; height: 16px; margin-top: 3px; background: linear-gradient(90deg, #000, var(--hue)) 6px 1px / 79px 4px no-repeat, linear-gradient(#999, #999) 5px 0 / 81px 6px no-repeat; }
    .chan input[type="range"]::-webkit-slider-thumb { appearance: none; width: 11px; height: 9px; margin-top: 6px; background: #aaa; clip-path: polygon(50% 0, 100% 50%, 100% 100%, 0 100%, 0 50%); }
    .r { --hue: #f00; }
    .g { --hue: #0f0; }
    .b { --hue: #00f; }
    .num { width: 51px; height: 20px; padding-left: 3px; background: #3a3a3a; border: 1px solid #303030; border-bottom-color: #666; }
    .ramp { display: flex; width: 200px; height: 16px; margin: 3px 0 0 2px; border: 1px solid #333; }
    .spectrum { flex: 1; background: linear-gradient(#fff, rgba(255, 255, 255, 0) 50%, rgba(0, 0, 0, 0) 50%, #000), linear-gradient(90deg, #e60012, #fff100 17%, #009944 33%, #00a0e9 50%, #1d2088 67%, #e4007f 83%, #e60012); }
    .ends { width: 8px; background: linear-gradient(#fff 50%, #000 50%); }
    .wide { grid-column: 1 / -1; }
    .adjust { height: 109px; padding: 4px 0 0 10px; border-bottom: 1px solid #2c2c2c; }
    .sets { width: 190px; padding-top: 4px; color: #8e8e8e; }
    .set { display: flex; justify-content: center; height: 27px; align-items: center; }
    .set button { display: grid; place-items: center; width: 24px; height: 20px; }
    .gap { height: 3px; flex: none; background: #303030; }
    .line { display: flex; align-items: center; height: 28px; padding: 0 4px 0 1px; border-top: 1px solid var(--lite); border-bottom: 1px solid var(--line); color: #b0b0b0; white-space: nowrap; flex: none; }
    .kind { width: 68px; padding-left: 6px; }
    .kind select { padding-left: 5px; }
    .kind select, .blend select { padding-right: 14px; }
    .filters { display: flex; gap: 10px; margin-left: 24px; }
    .toggle { width: 10px; height: 18px; margin-left: auto; margin-right: 1px; border: 1px solid #404040; background: linear-gradient(#777 50%, #444 50%); }
    .blend { width: 114px; }
    .cap { margin-left: auto; margin-right: 7px; }
    .combo { display: flex; width: 57px; height: 21px; border: 1px solid #404040; border-radius: 2px; }
    .combo input { width: 36px; background: #4a4a4a; }
    .combo button { flex: 1; display: grid; place-items: center; background: #5c5c5c; border-left: 1px solid #404040; color: #a8a8a8; }
    .locks { display: flex; gap: 8px; margin-left: 13px; }
    .lockLabel { margin-left: 6px; }
    .list { flex: 1; min-height: 60px; background: var(--well); }
    .foot { flex: none; justify-content: flex-end; gap: 12px; padding-right: 1px; }
    .foot .icon { width: 15px; }
    .foot .icon:last-child { width: 10px; margin-left: 4px; }
    .size { flex: none; }
  `];
  render(): TemplateResult {
    const rows = [
      ["brightness", "levels", "curves", "exposure", "vibrance"],
      ["hue", "balance", "bw", "photo", "mixer", "lookup"],
      ["invert", "poster", "threshold", "selective", "gradmap"],
    ];
    const combo = (id: string) => html`<span class="combo"><input id=${id} disabled><button aria-label="값 선택" disabled>${icon("arrowDown")}</button></span>`;
    return html`
      <div class="bar">${icon("chevL")}${icon("close")}</div>
      ${tabs(["색상", "색상 견본"])}
      <div class="color">
        <div class="chips">
          <button class="chip back" aria-label="배경색"></button>
          <button class="chip fore" aria-label="전경색"></button>
        </div>
        <div>
          ${["R", "G", "B"].map((c) => html`<div class="chan ${c.toLowerCase()}">
            <label for=${c}>${c}</label>
            <input type="range" id=${c} min="0" max="255" value="0">
            <input class="num" aria-label="${c} 값" value="0">
          </div>`)}
        </div>
        <div class="wide"><div class="ramp"><span class="spectrum"></span><span class="ends"></span></div></div>
      </div>
      <div class="gap"></div>
      ${tabs(["조정", "스타일"])}
      <div class="adjust">
        <div>조정 추가</div>
        <div class="sets">${rows.map((r) => html`<div class="set">${r.map((n) => html`<button aria-label=${n}>${icon(n)}</button>`)}</div>`)}</div>
      </div>
      <div class="gap"></div>
      ${tabs(["레이어", "채널", "패스"])}
      <div class="line">
        <span class="pick dim kind">${icon("search")}<select aria-label="필터 종류"><option>종류</option></select></span>
        <span class="filters">${["image", "adjust", "type", "shape", "smart"].map((n) => n === "type"
          ? html`<svg class="icon" width="14" height="14" viewBox="2 2 16 17">${icons.type.body}</svg>` : icon(n))}</span>
        <button class="toggle" aria-label="필터 켜기"></button>
      </div>
      <div class="line">
        <span class="pick dim blend"><select aria-label="혼합 모드"><option>표준</option></select></span>
        <label class="cap" for="opacity">불투명도:</label>${combo("opacity")}
      </div>
      <div class="line">
        <span class="lockLabel">잠그기:</span>
        <span class="locks">${icon("checker")}<svg class="icon" width="15" height="14" viewBox="1 1 19 17">${icons.brush.body}</svg>${icon("fourway")}${icon("lock")}</span>
        <label class="cap" for="fill">칠:</label>${combo("fill")}
      </div>
      <div class="well list"><div class="gutter"></div></div>
      <div class="foot">${["link", "fx", "mask", "adjust", "folder", "newLayer", "trash"].map(icon)}${icon("resize")}</div>
      <div class="size"><span class="grip"></span></div>`;
  }
}

/* ---------- taskbar ---------- */

@customElement("task-bar")
class TaskBar extends LitElement {
  static styles = [base, css`
    :host {
      display: flex;
      height: 50px;
      color: #111;
      background: linear-gradient(90deg, #e2d7e2, #e7d7d8 28%, #e2d5d8 35%, #e9d9d9 46%, #f1e3d8 53%, #eee0d4 80%, #e9dbdc 92%, #ecdfd4);
    }
    .start { display: grid; place-items: center; width: 60px; }
    .search { display: flex; align-items: center; gap: 12px; width: 430px; margin-top: 1px; padding-left: 13px; background: #fff; border: 1px solid #ccc; }
    .search input { flex: 1; height: 40px; font-size: 21px; line-height: 28px; }
    .search input::placeholder { color: #2a2a2a; opacity: 1; }
    .apps { display: flex; }
    .app { display: grid; place-items: center; width: 62px; height: 50px; }
    .view { width: 62px; }
    .apps .view + .app { margin-left: 1px; }
    .run { border-bottom: 3px solid #c08060; padding-top: 3px; width: 51px; margin: 0 6px; }
    .front { border-bottom: 3px solid #c08060; padding-top: 3px; background: #f8f3f2; }
    .tray { display: flex; align-items: center; margin-left: auto; }
    .up { margin-right: 14px; }
    .mode { width: 20px; margin: 0 18px 0 9px; font-size: 24px; line-height: 32px; text-align: center; }
    .lang { width: 20px; height: 20px; background: #fff; border: 1px solid #555; font-size: 15px; line-height: 17px; text-align: center; }
    .clock { width: 80px; margin-left: 19px; font-size: 15px; line-height: 23px; text-align: center; white-space: nowrap; }
    .bell { position: relative; margin: 0 24px 0 20px; }
    .count { position: absolute; left: 9px; top: 9px; width: 21px; height: 21px; border: 1px solid #888; border-radius: 50%; background: #d4cccc; font-size: 14px; line-height: 19px; font-weight: 700; text-align: center; }
    .desk { width: 5px; height: 50px; border-left: 1px solid #b0a8a4; }
  `];
  render(): TemplateResult {
    const apps = ["explorer", "snip", "chrome", "firefox", "ie"];
    return html`
      <button class="start" aria-label="시작">${icon("windows")}</button>
      <label class="search">${icon("find")}<input placeholder="검색하려면 여기에 입력하십시오." aria-label="검색"></label>
      <div class="apps">
        <button class="app view" aria-label="작업 보기">${icon("taskview")}</button>
        ${apps.map((a) => html`<button class="app" aria-label=${a}>${icon(a)}</button>`)}
        <button class="app run" aria-label="Word">${icon("word")}</button>
        <button class="app front" aria-label="Photoshop">${icon("psIcon")}</button>
      </div>
      <div class="tray">
        <span class="up">${icon("up")}</span>
        ${icon("wifi")}
        <span class="mode">A</span>
        <span class="lang">한</span>
        <div class="clock"><div>오전 1:02</div><div>2020-07-19</div></div>
        <button class="bell" aria-label="알림">${icon("notice")}<span class="count">1</span></button>
        <span class="desk"></span>
      </div>`;
  }
}

/* ---------- application ---------- */

@customElement("app-root")
class AppRoot extends LitElement {
  static styles = [base, css`
    :host { display: flex; flex-direction: column; min-height: 100vh; background: #262626; }
    .top { position: relative; z-index: 5; }
    .work { position: relative; flex: 1; display: flex; border-bottom: 1px solid #2a2a2a; }
    .canvas { flex: 1; }
    .icons { width: 39px; margin-top: 13px; }
    .dock { width: 242px; margin: 13px 7px 0 1px; }
    .history { position: absolute; right: 289px; top: 23px; width: 265px; }
    .props { position: absolute; right: 243px; top: 169px; width: 252px; z-index: 2; }
    .time { position: absolute; left: 120px; right: 290px; bottom: -1px; }
  `];
  render(): TemplateResult {
    return html`
      <header class="top"><menu-bar></menu-bar><options-bar></options-bar></header>
      <main class="work">
        <tool-box></tool-box>
        <div class="canvas"></div>
        <icon-dock class="icons"></icon-dock>
        <panel-dock class="dock"></panel-dock>
        <history-panel class="history"></history-panel>
        <properties-panel class="props"></properties-panel>
        <timeline-panel class="time"></timeline-panel>
      </main>
      <task-bar></task-bar>`;
  }
}
